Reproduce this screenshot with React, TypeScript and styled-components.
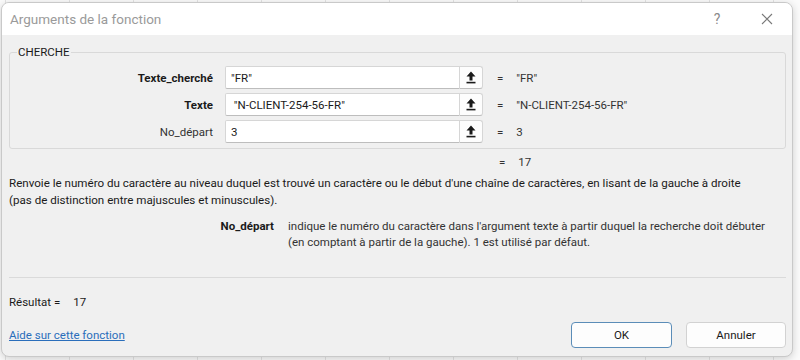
import React from "react";
import styled, { createGlobalStyle } from "styled-components";

const Global = createGlobalStyle`
  html, body { margin: 0; padding: 0; }
  body {
    width: 800px; height: 360px; overflow: hidden;
    background: #ffffff;
    font-family: Roboto, "Noto Sans", sans-serif;
    font-size: 11.5px;
    line-height: 16px;
    color: #1a1a1a;
  }
`;

const Backdrop = styled.div`
  width: 800px;
  height: 360px;
  box-sizing: border-box;
  padding: 2px 7px 3px 1px;
  background-color: #fbfbfb;
  background-image: linear-gradient(90deg, #e3e3e3 1px, transparent 1px);
  background-size: 64px 100%;
  background-position: 5px 0;
`;

const Dialog = styled.div`
  height: 100%;
  box-sizing: border-box;
  display: flex;
  flex-direction: column;
  background: #f0f0f0;
  border: 1px solid #c9c9c9;
  border-radius: 8px;
  overflow: hidden;
  box-shadow: 0 2px 8px rgba(0, 0, 0, 0.18);
`;

const TitleBar = styled.div`
  height: 32px;
  flex: none;
  display: flex;
  align-items: center;
  background: #ffffff;
  padding: 0 0 0 8px;
`;

const Title = styled.div`
  flex: 1;
  font-size: 13.5px;
  color: #9a9a9a;
`;

const TitleButton = styled.div`
  width: 50px;
  height: 32px;
  display: flex;
  align-items: center;
  justify-content: center;
  color: #8a8a8a;
  font-size: 14px;
`;

const Body = styled.div`
  flex: 1;
  display: flex;
  flex-direction: column;
  padding: 9px 6px 0 7px;
`;

const Group = styled.fieldset`
  margin: 0;
  padding: 6px 0 5px 0;
  border: 1px solid #d9d9d9;
  border-radius: 3px;
  display: grid;
  grid-template-columns: 203px 258px auto;
  column-gap: 12px;
  row-gap: 4px;
  align-items: center;
`;

const Legend = styled.legend`
  padding: 0 1px;
  margin-left: 7px;
  color: #1a1a1a;
`;

const Label = styled.div<{ $bold?: boolean }>`
  text-align: right;
  font-weight: ${(p) => (p.$bold ? 700 : 400)};
  color: ${(p) => (p.$bold ? "#1a1a1a" : "#333")};
`;

const Field = styled.div`
  display: flex;
  height: 23px;
`;

const Input = styled.div`
  flex: 1;
  box-sizing: border-box;
  background: #fff;
  border: 1px solid #d6d6d6;
  border-bottom-color: #bdbdbd;
  border-radius: 2px 0 0 2px;
  padding: 0 5px;
  display: flex;
  align-items: center;
  white-space: pre;
  color: #1a1a1a;
`;

const PickButton = styled.div`
  width: 23px;
  box-sizing: border-box;
  background: #fdfdfd;
  border: 1px solid #d6d6d6;
  border-bottom-color: #bdbdbd;
  border-left: none;
  border-radius: 0 3px 3px 0;
  display: flex;
  align-items: center;
  justify-content: center;
`;

const Value = styled.div`
  display: flex;
  gap: 13px;
  padding-left: 2px;
  color: #333;
`;

const TotalRow = styled.div`
  display: flex;
  gap: 13px;
  padding-left: 490px;
  margin-top: 5px;
  color: #333;
`;

const Description = styled.p`
  margin: 5px 0 0 0;
  font-size: 11.6px;
  line-height: 16.5px;
  color: #1a1a1a;
`;

const ArgHelp = styled.div`
  display: grid;
  grid-template-columns: 265px 1fr;
  column-gap: 14px;
  margin-top: 10px;
  line-height: 16px;
`;

const ArgName = styled.div`
  text-align: right;
  font-weight: 700;
`;

const ArgText = styled.div`
  color: #333;
`;

const Separator = styled.div`
  margin-top: 27px;
  border-top: 1px solid #dadada;
`;

const Footer = styled.div`
  display: flex;
  flex-direction: column;
  padding-top: 16px;
`;

const Result = styled.div`
  display: flex;
  gap: 13px;
`;

const ActionRow = styled.div`
  display: flex;
  align-items: center;
  gap: 14px;
  margin-top: 12px;
`;

const Link = styled.a`
  flex: 1;
  color: #2a6ebb;
  text-decoration: underline;
  cursor: pointer;
`;

const Button = styled.button<{ $primary?: boolean }>`
  width: ${(p) => (p.$primary ? 101 : 100)}px;
  height: 26px;
  box-sizing: border-box;
  font-family: inherit;
  font-size: 11.5px;
  color: #1a1a1a;
  background: #fdfdfd;
  border: 1px solid ${(p) => (p.$primary ? "#5b8db8" : "#d2d2d2")};
  border-radius: 4px;
`;

const UpArrow = () => (
  <svg width="10" height="13" viewBox="0 0 10 13">
    <path d="M5 0.5 L9.5 5.5 H6.5 V9.5 H3.5 V5.5 H0.5 Z" fill="#1a1a1a" />
    <rect x="0.5" y="10.8" width="9" height="1.6" fill="#1a1a1a" />
  </svg>
);

const args = [
  { label: "Texte_cherché", bold: true, input: '"FR"', value: '"FR"' },
  { label: "Texte", bold: true, input: ' "N-CLIENT-254-56-FR"', value: '"N-CLIENT-254-56-FR"' },
  { label: "No_départ", bold: false, input: "3", value: "3" },
];

export default function App() {
  return (
    <>
      <Global />
      <Backdrop>
        <Dialog>
          <TitleBar>
            <Title>Arguments de la fonction</Title>
            <TitleButton>?</TitleButton>
            <TitleButton>
              <svg width="12" height="12" viewBox="0 0 12 12">
                <path d="M1 1 L11 11 M11 1 L1 11" stroke="#7a7a7a" strokeWidth="1.1" />
              </svg>
            </TitleButton>
          </TitleBar>
          <Body>
            <Group>
              <Legend>CHERCHE</Legend>
              {args.map((a) => (
                <React.Fragment key={a.label}>
                  <Label $bold={a.bold}>{a.label}</Label>
                  <Field>
                    <Input>{a.input}</Input>
                    <PickButton>
                      <UpArrow />
                    </PickButton>
                  </Field>
                  <Value>
                    <span>=</span>
                    <span>{a.value}</span>
                  </Value>
                </React.Fragment>
              ))}
            </Group>
            <TotalRow>
              <span>=</span>
              <span>17</span>
            </TotalRow>
            <Description>
              Renvoie le numéro du caractère au niveau duquel est trouvé un caractère ou le début d'une chaîne de
              caractères, en lisant de la gauche à droite
              <br />
              (pas de distinction entre majuscules et minuscules).
            </Description>
            <ArgHelp>
              <ArgName>No_départ</ArgName>
              <ArgText>
                indique le numéro du caractère dans l'argument texte à partir duquel la recherche doit débuter
                <br />
                (en comptant à partir de la gauche). 1 est utilisé par défaut.
              </ArgText>
            </ArgHelp>
            <Separator />
            <Footer>
              <Result>
                <span>Résultat =</span>
                <span>17</span>
              </Result>
              <ActionRow>
                <Link>Aide sur cette fonction</Link>
                <Button $primary>OK</Button>
                <Button>Annuler</Button>
              </ActionRow>
            </Footer>
          </Body>
        </Dialog>
      </Backdrop>
    </>
  );
}
